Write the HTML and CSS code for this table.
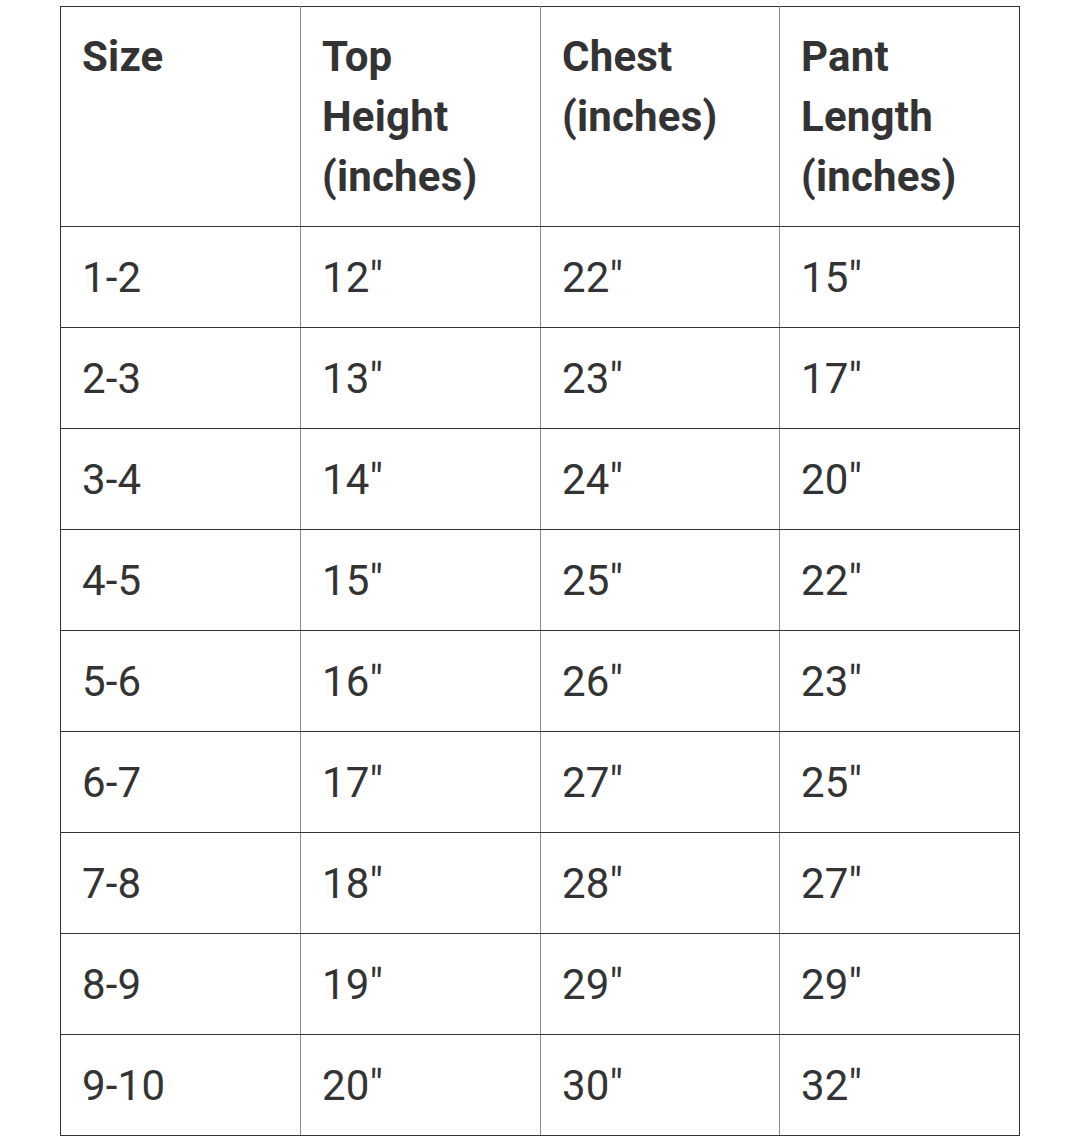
FILE: index.html
```html
<!DOCTYPE html>
<html>
<head>
<meta charset="utf-8">
<link rel="stylesheet" href="styles.css">
</head>
<body>
<table class="size-table">
  <colgroup>
    <col class="c1"><col class="c2"><col class="c3"><col class="c4">
  </colgroup>
  <thead>
    <tr>
      <th>Size</th>
      <th>Top<br>Height<br>(inches)</th>
      <th>Chest<br>(inches)</th>
      <th>Pant<br>Length<br>(inches)</th>
    </tr>
  </thead>
  <tbody>
    <tr><td>1-2</td><td>12"</td><td>22"</td><td>15"</td></tr>
    <tr><td>2-3</td><td>13"</td><td>23"</td><td>17"</td></tr>
    <tr><td>3-4</td><td>14"</td><td>24"</td><td>20"</td></tr>
    <tr><td>4-5</td><td>15"</td><td>25"</td><td>22"</td></tr>
    <tr><td>5-6</td><td>16"</td><td>26"</td><td>23"</td></tr>
    <tr><td>6-7</td><td>17"</td><td>27"</td><td>25"</td></tr>
    <tr><td>7-8</td><td>18"</td><td>28"</td><td>27"</td></tr>
    <tr><td>8-9</td><td>19"</td><td>29"</td><td>29"</td></tr>
    <tr><td>9-10</td><td>20"</td><td>30"</td><td>32"</td></tr>
  </tbody>
</table>
</body>
</html>
```
FILE: styles.css
```css
html, body {
  margin: 0;
  padding: 0;
  background: #ffffff;
}

body {
  font-family: Roboto, "Liberation Sans", sans-serif;
  color: #333333;
}

.size-table {
  margin: 6px 0 0 60px;
  border-collapse: collapse;
  table-layout: fixed;
  width: 959px;
  border: 1px solid #333333;
}

.c1, .c2, .c4 { width: 240px; }
.c3 { width: 239px; }

.size-table th,
.size-table td {
  text-align: left;
  padding: 0 0 0 21px;
  font-size: 42px;
  letter-spacing: 0.2px;
  border-left: 1px solid #8a8a8a;
  border-right: 1px solid #8a8a8a;
  border-top: 1px solid #333333;
  border-bottom: 1px solid #333333;
}

.size-table th:first-child,
.size-table td:first-child {
  border-left: 1px solid #333333;
}

.size-table th:last-child,
.size-table td:last-child {
  border-right: 1px solid #333333;
}

.size-table th {
  font-weight: 700;
  line-height: 60px;
  vertical-align: top;
  height: 220px;
  box-sizing: border-box;
  padding-top: 20px;
}

.size-table td {
  font-weight: 400;
  line-height: 48px;
  vertical-align: middle;
  height: 101px;
  box-sizing: border-box;
  padding-top: 2px;
}
```
